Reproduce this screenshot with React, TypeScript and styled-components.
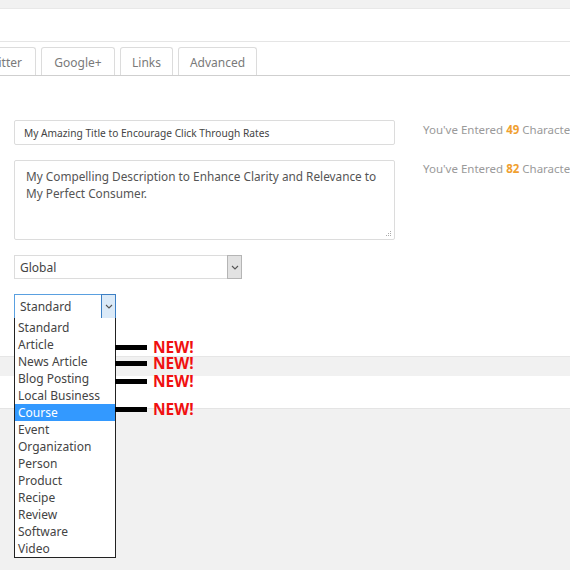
import styled, { createGlobalStyle } from "styled-components";

const GlobalStyle = createGlobalStyle`
  body {
    margin: 0;
    background: #f1f1f1;
    font-family: "Noto Sans", "Open Sans", sans-serif;
    overflow: hidden;
  }
`;

const Page = styled.div`
  width: 570px;
  height: 570px;
  overflow: hidden;
  background: #f1f1f1;
`;

const TopGap = styled.div`
  height: 8px;
`;

const Panel = styled.div`
  background: #fff;
  border-top: 1px solid #e8e8e8;
`;

const HeaderStrip = styled.div`
  height: 32px;
  border-bottom: 1px solid #e5e5e5;
`;

const TabBar = styled.div`
  display: flex;
  gap: 5px;
  padding-top: 5px;
  height: 28px;
  border-bottom: 1px solid #cfcfcf;
  margin-left: -32px;
`;

const Tab = styled.div<{ $w: number; $edge?: boolean }>`
  width: ${(p) => p.$w}px;
  flex-shrink: 0;
  height: 28px;
  box-sizing: border-box;
  padding-top: 2px;
  padding-right: ${(p) => (p.$edge ? "13px" : "0")};
  border: 1px solid #dcdcdc;
  border-bottom: none;
  border-radius: 3px 3px 0 0;
  display: flex;
  align-items: center;
  justify-content: ${(p) => (p.$edge ? "flex-end" : "center")};
  font-size: 12px;
  color: #7a7a7a;
  background: #fff;
  white-space: nowrap;
`;

const Content = styled.div`
  padding: 44px 0 37px 14px;
  display: flex;
  flex-direction: column;
  gap: 15px;
`;

const FieldRow = styled.div`
  display: flex;
  align-items: flex-start;
`;

const TextInput = styled.div`
  width: 381px;
  flex-shrink: 0;
  height: 25px;
  box-sizing: border-box;
  border: 1px solid #dcdcdc;
  border-radius: 2px;
  padding-left: 9px;
  display: flex;
  align-items: center;
  font-size: 10.2px;
  color: #444;
  white-space: nowrap;
`;

const TextArea = styled.div`
  position: relative;
  width: 381px;
  flex-shrink: 0;
  height: 80px;
  box-sizing: border-box;
  border: 1px solid #dcdcdc;
  border-radius: 2px;
  padding: 7px 11px;
  font-size: 11.8px;
  line-height: 17px;
  color: #555;
`;

const Grip = styled.svg`
  position: absolute;
  right: 2px;
  bottom: 2px;
`;

const Counter = styled.div<{ $top: number }>`
  margin-left: 28px;
  margin-top: ${(p) => p.$top}px;
  font-size: 11.5px;
  color: #9a9a9a;
  white-space: nowrap;
  b {
    color: #f0a030;
  }
`;

const Select = styled.div<{ $w: number; $h: number; $focus?: boolean }>`
  position: relative;
  width: ${(p) => p.$w}px;
  height: ${(p) => p.$h}px;
  box-sizing: border-box;
  border: 1px solid ${(p) => (p.$focus ? "#5aa0e0" : "#dcdcdc")};
  display: flex;
  align-items: center;
  padding-left: 5px;
  font-size: 12px;
  color: #444;
`;

const SelectArrow = styled.div<{ $focus?: boolean }>`
  position: absolute;
  right: -1px;
  top: -1px;
  bottom: -1px;
  width: 15px;
  box-sizing: border-box;
  border: 1px solid ${(p) => (p.$focus ? "#3c7fc4" : "#b5b5b5")};
  background: ${(p) => (p.$focus ? "#dbeaf8" : "#e2e2e2")};
  display: flex;
  align-items: center;
  justify-content: center;
`;

const SchemaWrap = styled.div`
  position: relative;
  width: 101px;
`;

const OptionList = styled.div`
  position: absolute;
  top: 24px;
  left: 0;
  width: 102px;
  box-sizing: border-box;
  border: 1px solid #222;
  border-top: none;
  background: #fff;
  padding-top: 1px;
  z-index: 5;
`;

const Option = styled.div<{ $active?: boolean }>`
  height: 17px;
  line-height: 17px;
  padding-left: 3px;
  font-size: 12px;
  color: ${(p) => (p.$active ? "#fff" : "#444")};
  background: ${(p) => (p.$active ? "#3399ff" : "transparent")};
  white-space: nowrap;
`;

const Marker = styled.div<{ $top: number }>`
  position: absolute;
  left: 101px;
  top: ${(p) => p.$top}px;
  height: 14px;
  display: flex;
  align-items: center;
  gap: 6px;
  z-index: 6;
`;

const MarkerBar = styled.div`
  width: 32px;
  height: 5px;
  background: #000;
`;

const NewTag = styled.span`
  font-family: "Open Sans", "Noto Sans", sans-serif;
  font-weight: 700;
  font-size: 15.5px;
  color: #f01010;
  line-height: 14px;
`;

const GrayBand = styled.div`
  height: 19px;
  background: #f1f1f1;
  border-top: 1px solid #e6e6e6;
`;

const WhiteBand = styled.div`
  height: 32px;
  background: #fff;
  border-bottom: 1px solid #e4e4e4;
`;

const Chevron = () => (
  <svg width="8" height="5" viewBox="0 0 8 5">
    <path d="M1 1 L4 4 L7 1" fill="none" stroke="#555" strokeWidth="1.1" />
  </svg>
);

const options = [
  "Standard",
  "Article",
  "News Article",
  "Blog Posting",
  "Local Business",
  "Course",
  "Event",
  "Organization",
  "Person",
  "Product",
  "Recipe",
  "Review",
  "Software",
  "Video",
];

const markerTops = [46, 62, 80, 108];

export default function App() {
  return (
    <Page>
      <GlobalStyle />
      <TopGap />
      <Panel>
        <HeaderStrip />
        <TabBar>
          <Tab $w={68} $edge>
            Twitter
          </Tab>
          <Tab $w={74}>Google+</Tab>
          <Tab $w={53}>Links</Tab>
          <Tab $w={79}>Advanced</Tab>
        </TabBar>
        <Content>
          <FieldRow>
            <TextInput>My Amazing Title to Encourage Click Through Rates</TextInput>
            <Counter $top={2}>
              You've Entered <b>49</b> Characters
            </Counter>
          </FieldRow>
          <FieldRow>
            <TextArea>
              My Compelling Description to Enhance Clarity and Relevance to My Perfect Consumer.
              <Grip width="7" height="7" viewBox="0 0 7 7">
                <rect x="5" y="1" width="1" height="1" fill="#aaa" />
                <rect x="3" y="3" width="1" height="1" fill="#aaa" />
                <rect x="5" y="3" width="1" height="1" fill="#aaa" />
                <rect x="1" y="5" width="1" height="1" fill="#aaa" />
                <rect x="3" y="5" width="1" height="1" fill="#aaa" />
                <rect x="5" y="5" width="1" height="1" fill="#aaa" />
              </Grip>
            </TextArea>
            <Counter $top={1}>
              You've Entered <b>82</b> Characters
            </Counter>
          </FieldRow>
          <Select $w={228} $h={24}>
            Global
            <SelectArrow>
              <Chevron />
            </SelectArrow>
          </Select>
          <SchemaWrap>
            <Select $w={102} $h={25} $focus>
              Standard
              <SelectArrow $focus>
                <Chevron />
              </SelectArrow>
            </Select>
            <OptionList>
              {options.map((o) => (
                <Option key={o} $active={o === "Course"}>
                  {o}
                </Option>
              ))}
            </OptionList>
            {markerTops.map((t) => (
              <Marker key={t} $top={t}>
                <MarkerBar />
                <NewTag>NEW!</NewTag>
              </Marker>
            ))}
          </SchemaWrap>
        </Content>
      </Panel>
      <GrayBand />
      <WhiteBand />
    </Page>
  );
}
